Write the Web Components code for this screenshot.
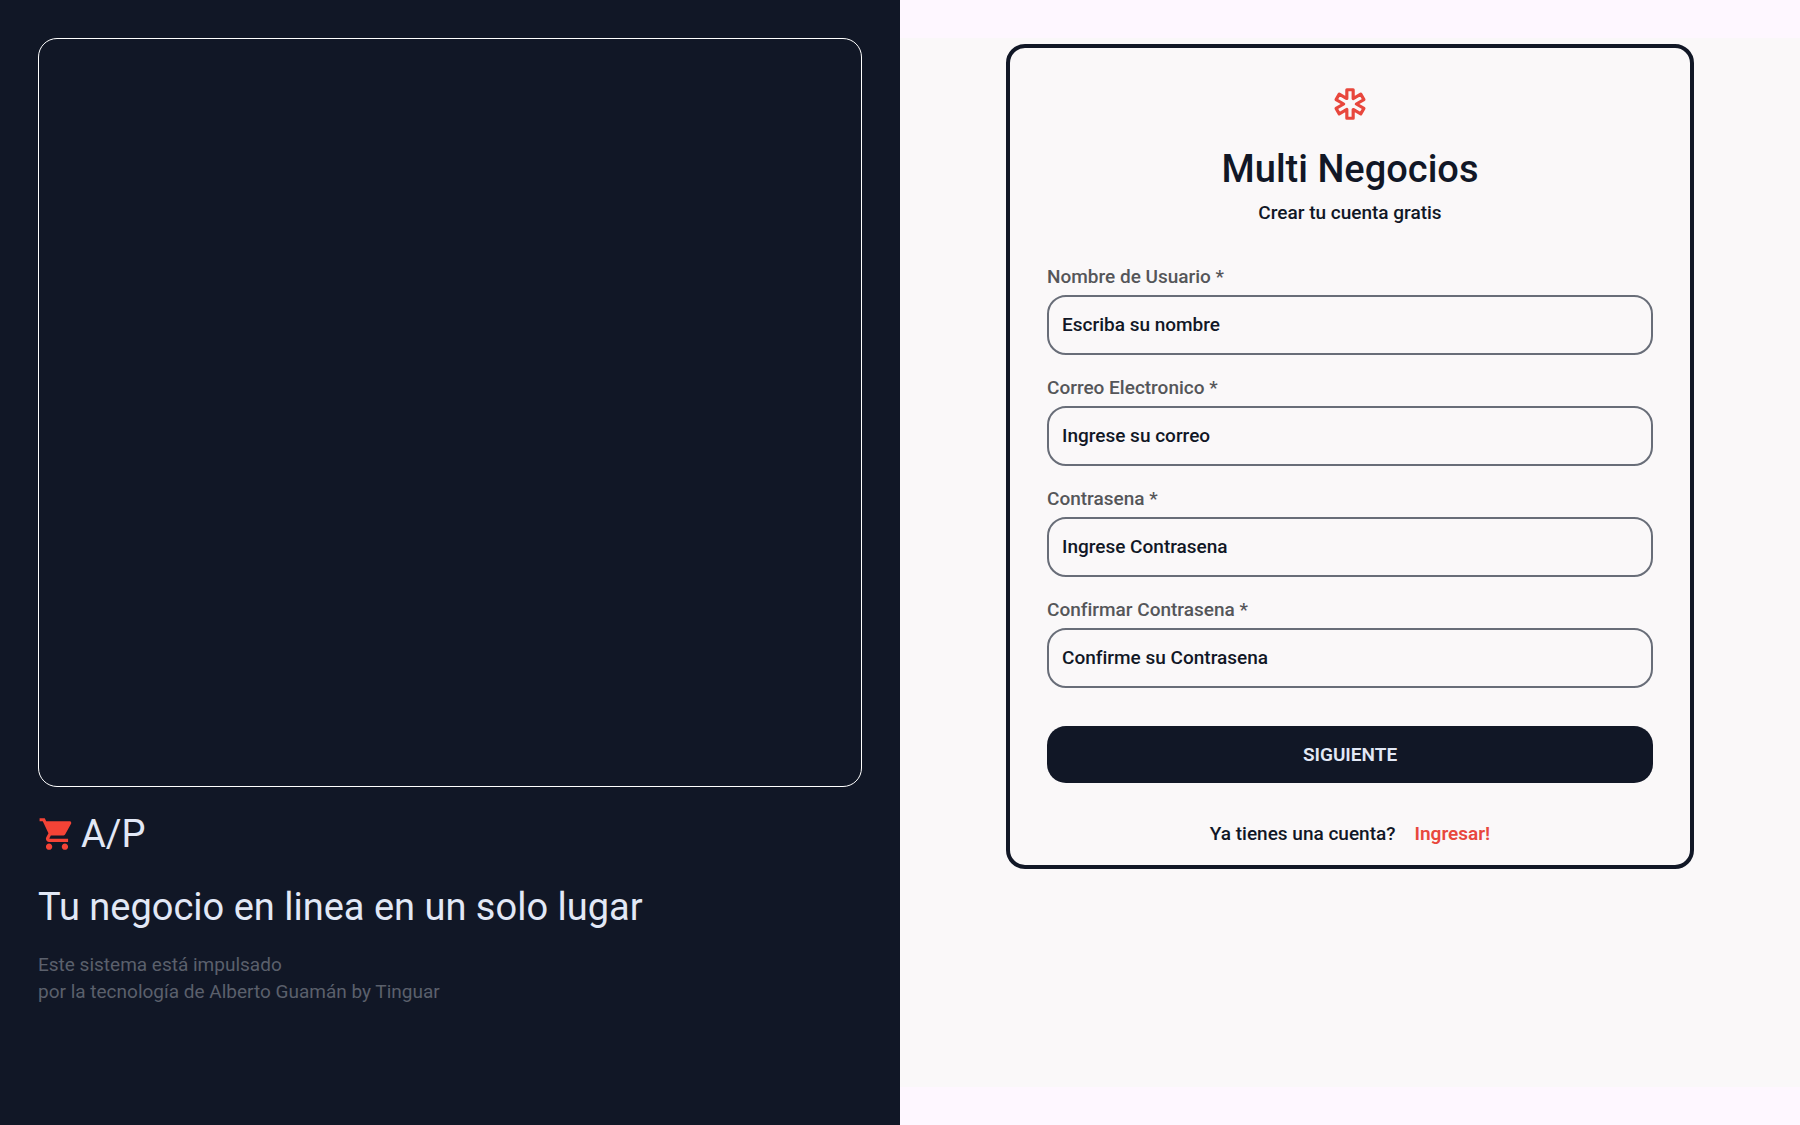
<!DOCTYPE html>
<html lang="es">
<head>
<meta charset="utf-8">
<meta name="viewport" content="width=device-width, initial-scale=1">
<title>Multi Negocios</title>
<style>
  :root {
    --ink: #111726;
    --paper: #faf8f9;
    --surface: #fef7ff;
    --light: #e2e8f6;
    --accent: #f44336;
    --accent-soft: #e8473d;
    --muted: #5b606c;
    --label: #555659;
    --outline: #686d78;
    --radius: 19px;
  }
  body {
    margin: 0;
    background: var(--surface);
    font-family: Roboto, "Liberation Sans", sans-serif;
    font-size: 19px;
    line-height: 27px;
    font-variant-ligatures: none;
  }
</style>
</head>
<body>
<register-page>
  <brand-panel slot="brand" name="A/P">
    <span slot="headline">Tu negocio en linea en un solo lugar</span>
    <span slot="note">Este sistema está impulsado<br>por la tecnología de Alberto Guamán by Tinguar</span>
  </brand-panel>
  <register-card slot="form">
    <span slot="title">Multi Negocios</span>
    <span slot="subtitle">Crear tu cuenta gratis</span>
    <text-field label="Nombre de Usuario *" hint="Escriba su nombre" type="text"></text-field>
    <text-field label="Correo Electronico *" hint="Ingrese su correo" type="email"></text-field>
    <text-field label="Contrasena *" hint="Ingrese Contrasena" type="password"></text-field>
    <text-field label="Confirmar Contrasena *" hint="Confirme su Contrasena" type="password"></text-field>
    <primary-button slot="action">SIGUIENTE</primary-button>
    <login-prompt slot="footer" link="Ingresar!">Ya tienes una cuenta?</login-prompt>
  </register-card>
</register-page>

<script>
  class BaseElement extends HTMLElement {
    constructor() {
      super();
      this.attachShadow({ mode: "open" });
    }
    connectedCallback() {
      this.shadowRoot.innerHTML = `<style>*{box-sizing:border-box}h1,h2,p{margin:0;font-weight:inherit}</style>` + this.render();
    }
  }

  customElements.define("register-page", class extends BaseElement {
    render() {
      return `<style>
        :host { display: grid; grid-template-columns: 1fr 1fr; min-height: 100vh; }
        aside { background: var(--ink); padding: 38px; }
        .side { padding: 38px 0; display: flex; }
        main { flex: 1; background: var(--paper); padding: 6px 38px; display: flex; flex-direction: column; align-items: center; }
      </style>
      <aside><slot name="brand"></slot></aside>
      <div class="side"><main><slot name="form"></slot></main></div>`;
    }
  });

  customElements.define("brand-panel", class extends BaseElement {
    render() {
      return `<style>
        :host { display: flex; flex-direction: column; color: var(--light); }
        .frame { height: calc(100vh * 2 / 3 - 1px); border: 1px solid #fff; border-radius: var(--radius); margin-bottom: 25px; }
        .brand { display: flex; align-items: center; gap: 5px; margin-bottom: 29px; }
        .brand, h1 { font-size: 38px; line-height: 44px; }
        h1 { margin-bottom: 22px; }
        svg { width: 38px; height: 38px; fill: var(--accent); }
        .note { color: var(--muted); }
      </style>
      <div class="frame"></div>
      <div class="brand">
        <svg viewBox="0 0 24 24" aria-hidden="true"><path d="M7 18c-1.100 0-1.990.9-1.990 2S5.900 22 7 22s2-.9 2-2-.9-2-2-2zM1 2v2h2l3.600 7.590-1.350 2.450c-.16.28-.25.61-.25.96 0 1.100.9 2 2 2h12v-2H7.420c-.14 0-.25-.11-.25-.25l.03-.12.9-1.630h7.450c.75 0 1.410-.41 1.750-1.030l3.580-6.490c.08-.14.12-.31.12-.48 0-.55-.45-1-1-1H5.210l-.94-2H1zm16 16c-1.100 0-1.990.9-1.990 2s.89 2 1.990 2 2-.9 2-2-.9-2-2-2z"/></svg>
        <span>${this.getAttribute("name")}</span>
      </div>
      <h1><slot name="headline"></slot></h1>
      <p class="note"><slot name="note"></slot></p>`;
    }
  });

  customElements.define("register-card", class extends BaseElement {
    render() {
      return `<style>
        :host { display: block; width: 100%; max-width: 688px; box-sizing: border-box; border: 4px solid var(--ink); border-radius: var(--radius); padding: 37px 37px 18px; color: var(--ink); font-weight: 500; }
        form { display: flex; flex-direction: column; }
        header { display: flex; flex-direction: column; align-items: center; margin-bottom: 37px; }
        svg { width: 38px; height: 38px; fill: none; stroke: var(--accent-soft); stroke-width: 2; stroke-linejoin: round; margin-bottom: 24px; }
        h2 { font-size: 38px; line-height: 44px; margin-bottom: 8px; }
        .fields { display: flex; flex-direction: column; gap: 19px; margin-bottom: 38px; }
        footer { margin-top: 37px; }
      </style>
      <form>
        <header>
          <svg viewBox="0 0 24 24" aria-hidden="true"><path d="M20.790 9.230l-2-3.460L14 8.540V3h-4v5.540L5.210 5.770l-2 3.460L8 12l-4.790 2.770 2 3.460L10 15.460V21h4v-5.540l4.790 2.770 2-3.460L16 12z"/></svg>
          <h2><slot name="title"></slot></h2>
          <p><slot name="subtitle"></slot></p>
        </header>
        <div class="fields"><slot></slot></div>
        <slot name="action"></slot>
        <footer><slot name="footer"></slot></footer>
      </form>`;
    }
  });

  customElements.define("text-field", class extends BaseElement {
    render() {
      return `<style>
        :host { display: flex; flex-direction: column; gap: 5px; }
        label { color: var(--label); }
        input { width: 100%; height: 60px; margin: 0; padding: 0 13px 2px; border: 2px solid var(--outline); border-radius: var(--radius); background: transparent; color: var(--ink); font: inherit; outline-color: var(--ink); }
        input::placeholder { color: var(--ink); opacity: 1; }
      </style>
      <label for="control">${this.getAttribute("label")}</label>
      <input id="control" type="${this.getAttribute("type")}" placeholder="${this.getAttribute("hint")}">`;
    }
  });

  customElements.define("primary-button", class extends BaseElement {
    render() {
      return `<style>
        :host { display: block; }
        button { display: block; width: 100%; height: 57px; border: 0; border-radius: var(--radius); background: var(--ink); color: var(--light); font: inherit; font-weight: 600; cursor: pointer; }
      </style>
      <button type="button"><slot></slot></button>`;
    }
  });

  customElements.define("login-prompt", class extends BaseElement {
    render() {
      return `<style>
        :host { display: flex; justify-content: center; gap: 19px; }
        a { color: var(--accent-soft); text-decoration: none; font-weight: 600; }
      </style>
      <span><slot></slot></span><a href="#ingresar">${this.getAttribute("link")}</a>`;
    }
  });
</script>
</body>
</html>
